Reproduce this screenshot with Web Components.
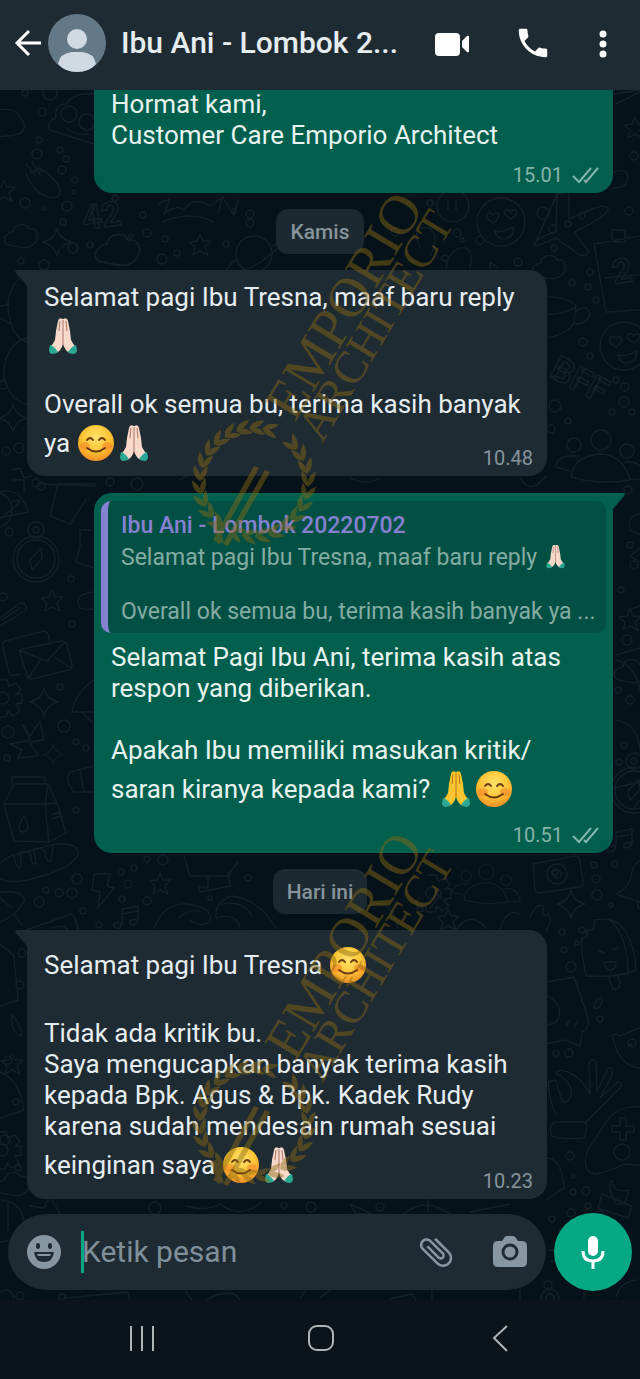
<!DOCTYPE html>
<html lang="id">
<head>
<meta charset="utf-8">
<meta name="viewport" content="width=device-width, initial-scale=1">
<title>Ibu Ani - Lombok</title>
<style>
  html, body { margin: 0; background: #0b141b; }
  body { font-family: Roboto, "Noto Sans", sans-serif; color: #e6edf0; }
</style>
</head>
<body>
<chat-app>
  <chat-header slot="header" name="Ibu Ani - Lombok 2..."></chat-header>

  <chat-bubble side="out" cut time="15.01" gap="12">
    <p>Hormat kami,</p>
    <p>Customer Care Emporio Architect</p>
  </chat-bubble>

  <day-chip>Kamis</day-chip>

  <chat-bubble side="in" tail time="10.48" gap="-12">
    <p>Selamat pagi Ibu Tresna, maaf baru reply</p>
    <p class="tall"><chat-emoji kind="hands"></chat-emoji></p>
    <p class="tall"></p>
    <p>Overall ok semua bu, terima kasih banyak</p>
    <p class="tall">ya <chat-emoji kind="smile"></chat-emoji><chat-emoji kind="hands"></chat-emoji></p>
  </chat-bubble>

  <chat-bubble side="out" tail time="10.51" gap="19">
    <quoted-message slot="quote" name="Ibu Ani - Lombok 20220702">
      <p>Selamat pagi Ibu Tresna, maaf baru reply <chat-emoji kind="hands" small></chat-emoji></p>
      <p></p>
      <p>Overall ok semua bu, terima kasih banyak ya ...</p>
    </quoted-message>
    <p>Selamat Pagi Ibu Ani, terima kasih atas</p>
    <p>respon yang diberikan.</p>
    <p></p>
    <p>Apakah Ibu memiliki masukan kritik/</p>
    <p class="tall">saran kiranya kepada kami? <chat-emoji kind="hands" tone="yellow"></chat-emoji><chat-emoji kind="smile"></chat-emoji></p>
  </chat-bubble>

  <day-chip>Hari ini</day-chip>

  <chat-bubble side="in" tail time="10.23" gap="-11">
    <p class="tall">Selamat pagi Ibu Tresna <chat-emoji kind="smile"></chat-emoji></p>
    <p class="tall"></p>
    <p>Tidak ada kritik bu.</p>
    <p>Saya mengucapkan banyak terima kasih</p>
    <p>kepada Bpk. Agus &amp; Bpk. Kadek Rudy</p>
    <p>karena sudah mendesain rumah sesuai</p>
    <p class="tall">keinginan saya <chat-emoji kind="smile"></chat-emoji><chat-emoji kind="hands"></chat-emoji></p>
  </chat-bubble>

  <message-composer slot="composer"></message-composer>
  <system-nav slot="nav"></system-nav>
</chat-app>

<script>
const define = (name, html, setup) => {
  const tpl = document.createElement('template');
  tpl.innerHTML = html;
  customElements.define(name, class extends HTMLElement {
    constructor() {
      super();
      this.attachShadow({ mode: 'open' }).append(tpl.content.cloneNode(true));
    }
    connectedCallback() { if (setup) setup(this, this.shadowRoot); }
  });
};

const buttonReset = `
  button { appearance: none; border: 0; padding: 0; background: none; color: inherit;
    display: grid; place-items: center; cursor: pointer; }
  svg { display: block; }`;

/* ---------- wallpaper of faint line doodles ---------- */
const dots = [[25,93,3],[50,93,7],[42,112,4],[39,140,3],[37,154,5],[60,150,3],[62,170,4],[66,159,3],[75,180,3],[74,192,2],
 [25,203,5],[44,208,2],[67,206,5],[63,222,3],[73,248,5],[90,245,3],[21,261,3],[44,265,5],[115,198,3],[143,215,3],[131,236,2],
 [147,233,4],[165,239,3],[162,259,5],[177,253,3],[226,244,3],[234,211,2],[250,214,4],[250,223,4],[6,451,4],[19,448,5],[3,385,4],[36,483,4],[110,482,4],[137,484,6],
 [9,532,4],[41,486,4],[71,579,3],[72,624,3],[3,597,4],[60,687,3],[8,732,6],[64,726,6],[76,742,3],[86,748,3],[7,758,3],
 [76,810,3],[77,879,5],[46,890,3],[59,893,4],[72,893,5],[39,902,5],[83,911,3],[99,925,3],[121,872,3],[134,868,3],[128,884,4],
 [122,899,3],[147,901,4],[147,859,3],[163,860,5],[248,878,3],[22,953,4],[20,985,4],
 [634,156,4],[543,213,6],[629,211,4],[553,229,4],[568,224,3],[582,216,3],[554,248,3],[572,283,3],[588,287,3],[590,272,3],[596,300,3],
 [583,342,4],[590,356,3],[555,406,6],[568,421,3],[551,429,4],[612,412,3],[616,380,3],[625,387,4],[624,402,5],[632,412,3],[628,490,4],
 [457,233,4],[518,262,4],[462,240,2],[630,545,3],[634,565,4],[621,590,3],[627,640,5],[618,690,3],[630,700,4],[624,745,3],[619,762,3],
 [594,865,3],[615,864,3],[596,879,4],[597,895,5],[611,905,2],[562,932,3],[582,930,3],[577,943,2],[564,950,3],[571,967,5],[600,1019,3],
 [556,1053,3],[569,1053,4],[570,1156,4],[573,1176,2],[573,1192,3],[586,1191,4],[588,1206,3],[571,1213,4],[8,1060,4],[16,1102,3],[5,1140,5],[18,1168,3],
 [155,1208,6],[284,1205,3],[311,1207,5],[380,1207,4],[20,1296,4],[62,1297,3],[548,1285,4],[552,1219,3],
 [480,240,4],[395,232,4],[445,258,3],[430,203,3],[555,872,3],[438,893,3],[420,909,3],[210,898,2],[600,1215,4]]
 .map(([x, y, r]) => `<circle cx="${x}" cy="${y}" r="${r}"/>`).join('');

define('chat-wallpaper', `
<style>
  :host { position: absolute; inset: 0; overflow: hidden; pointer-events: none; }
  svg { display: block; width: 100%; fill: none; stroke: #152128; stroke-width: 1.4px; stroke-linejoin: round; stroke-linecap: round; }
  text { font: 700 34px Roboto, sans-serif; }
</style>
<svg viewBox="0 90 640 1210" aria-hidden="true">
  <defs>
    <path id="star" d="M0-11 3-4 11-4 5 2 8 10 0 6-7 10-5 2-11-3-3-4Z"/>
    <path id="spark" d="M0-14Q2-3 14 0 2 3 0 14-3 3-14 0-2-3 0-14Z"/>
    <path id="cloud" d="M-14 8C-24 2-12-6-9-5-8-15 6-14 7-8 16-10 18 1 12 7 4 14-4 9-14 8Z"/>
    <g id="love"><circle r="24"/><path d="M-8 1C-20-6-12-13-8-7-4-13 2-6-8 1ZM10-3C-1-9 5-16 10-10 14-16 20-9 10-3ZM-6 9Q4 11 12 5 14 15 4 17-4 18-6 9Z"/></g>
    <g id="people"><circle r="10"/><path d="M-30 37Q-28 16 0 14 22 15 29 40-4 45-30 37Z"/><circle cx="-27" cy="5" r="7"/><circle cx="26" cy="11" r="7"/><path d="M-31 31-45 27Q-44 14-22 16M24 22Q42 20 45 40L30 39"/></g>
    <g id="envelope"><path d="M-22-14 17-24Q21-24 22-17L23-12M-22-14Q-26-12-24-8L-18 18Q-17 22-7 19"/><path d="M-5-6 34-14Q39-14 40-10L45 10Q45 14 42 15L5 24Q1 24 0 20L-7-2Q-8-5-5-6ZM-6-4 20 6 38-13M2 22 14 4M44 13 27 2"/></g>
    <g id="plane"><path d="M-40 24Q-40 16-18 10L-17-28M-17-28 -5-30-5-3 20-14Q34-18 34-12 30-4 0 10L15 30Q10 36 4 32L-18 16Q-36 24-40 24Z"/></g>
    <g id="calendar"><path d="M-28-18 40-30M-28-18-16 50 46 46M-18 16 46 10M-10-24V-32H3V-20H-8Z"/></g>
    <g id="milk"><path d="M-30-4-20-24H14L23-5 32 25 15 34-20 33ZM-30-4H11L23-5M11-4 15 34M14-24 11-4M-22-24V-31H11V-24"/><path d="M-10 8Q-20 24-10 24-2 22-10 8M18 7 26 4M18 11 26 8"/></g>
    <path id="bread" d="M-36 16Q-44 4-26-6L20-18Q42-20 42-8 36 6 6 14-26 24-36 16ZM-22-6Q-20 6-16 6-14 0-16-9-4-14-5-2-4 2 0 2L-2-13Q10-16 10-4 12 0 15-1L17-15"/>
    <g id="compass"><circle r="23"/><circle r="19"/><circle cy="-29" r="8"/><circle cy="-29" r="3"/><path d="M5-11-6 1-4 11 6-1Z"/></g>
    <g id="gear"><circle r="6"/><path d="M-4-18H4L6-12 13-15 18-8 13-4H19V5L13 6 17 13 10 18 5 13 3 19H-5L-6 13-13 15-17 9-12 5"/></g>
    <g id="camera"><path d="M-24-10 18-18Q22-18 23-13L26 8Q26 12 22 13L-17 19Q-21 19-22 15Z"/><circle r="10"/><circle r="4"/></g>
    <g id="ice"><path d="M-22 26Q-28-4-26-12-18-12-22-20-12-18-14-30 8-34 18-18 28 0 28 20 12 28-22 26ZM2-30Q20-14 20 24M0 26 5 39Q10 42 12 34L10 25"/><path d="M-10 0-4 3M5 0 10-3M-4 12H8Q8 20 2 20-4 18-4 12"/></g>
    <g id="hand"><path d="M-28-10Q-26 12-20 22M-28-10-20-12Q-14 14-10 10-2 6-6-6-14-18-20-18-18-24-8-20 6-14 14 2L13-28Q16-36 20-30L21 0 32-24Q38-26 36-16L24 6 42-10Q48-10 44-4 24 16 10 30M-22 30H8Q13 32 8 46-12 48-24 44-28 36-22 30Z"/></g>
    <g id="pad"><path d="M40-28Q10-34-4-14L-22 14Q-30 36-14 38 4 34 14 28L40 30"/><path d="M10-18H16V-10H24V-4H16V4H10V-4H2V-10H10Z"/><circle cx="12" cy="16" r="8"/></g>
    <g id="cup"><path d="M-30-14Q0-24 20-10L18 8Q10 24-30 24M-30-4Q0 4 20-8M20-4Q32-12 34 0 28 12 18 8"/></g>
    <path id="bolt" d="M-8-16H8L5-4 12-2-4 18-2 2-10 0Z"/>
    <path id="note" d="M-6 6V-8L10-11V3M-6-3 10-6M-6 6Q-16 4-14 10-8 14-6 6ZM10 3Q0 1 2 7 8 10 10 3Z"/>
    <g id="planet"><circle r="18"/><path d="M-17 5Q-34 18-24 20-2 18 24-6 28-12 18-8"/></g>
    <path id="glove" d="M-18-18-8-6M-12-20-4-8M-6-16-2-10M-18-8Q-8 14 8 16 20 16 14 2 4-10-6-14L-14-8"/>
    <path id="bell" d="M-22 14Q-8 8-6-8-2-24 16-20L30-12M-22 14 20 28M0 22Q-2 30 8 30"/>
  </defs>
  ${dots}
  <path d="M-2 110Q16 106 22 120 30 134 8 136L-2 137M50 130Q46 122 56 118 54 104 66 104 74 92 94 94M50 130 94 144"/>
  <circle cx="69" cy="114" r="8"/><circle cx="87" cy="122" r="8"/><path d="M66 128Q76 136 88 134"/>
  <use href="#glove" x="44" y="182"/><use href="#star" x="4" y="191"/><use href="#cloud" x="22" y="237"/><use href="#spark" x="57" y="242"/>
  <text x="84" y="230" transform="rotate(-8 84 230)">42</text>
  <path d="M158 204 170 199 164 214Q176 204 184 210 192 196 210 206L222 198 218 214M162 222Q190 210 214 222M222 196 234 216 238 200"/>
  <use href="#star" x="200" y="245"/><use href="#planet" x="254" y="254"/><use href="#cloud" x="118" y="252" transform="translate(-38 -84) scale(1.33)"/>
  <path d="M26 272Q2 290 10 320 14 338 27 342M27 338Q4 344 4 376 8 400 27 404M0 306 10 304M0 318 11 324"/>
  <use href="#spark" x="13" y="418"/><path d="M12 470 20 468 24 478 32 476M40 484 96 486M12 480H24V492"/>
  <use href="#planet" x="-6" y="510"/><path d="M58 484 50 516 70 524 86 500M58 484H96M0 492Q20 486 28 512L0 518"/>
  <use href="#compass" x="36" y="559"/><use href="#star" x="52" y="601"/><path d="M0 618 20 603Q28 603 26 610L0 626M2 620 20 608M94 592Q72 594 80 608 84 610 94 609M90 530H80V546L76 562 94 568"/>
  <use href="#envelope" x="27" y="655"/><use href="#gear" x="3" y="698"/><use href="#spark" x="44" y="702"/><path d="M94 680Q74 694 72 712H94M82 712 92 722M22 724 30 736 40 721 44 740 30 742 38 756 18 758 22 750 10 744 30 740Z"/>
  <use href="#spark" x="53" y="755" transform="translate(16 226) scale(.7)"/><use href="#milk" x="34" y="808"/><path d="M94 766 70 772Q64 780 74 792L94 792M80 770 84 792"/>
  <use href="#bread" x="36" y="862"/><path d="M0 892Q26 890 24 902 16 916 0 922M14 914 22 925M0 898 12 908M26 930 72 914Q76 918 78 930M52 928Q62 924 68 930"/>
  <use href="#bolt" x="102" y="890"/><use href="#star" x="160" y="884"/><use href="#note" x="128" y="917"/>
  <path d="M184 856 190 876H228L238 862M208 876V888Q196 884 200 892L230 886 228 872M154 928Q164 902 188 904 214 908 210 922 200 928 190 920M276 928Q260 900 232 896 214 902 216 918 236 912 240 928M178 918Q190 908 200 912M222 904Q244 900 252 916"/>
  <path d="M0 944 14 956 18 1000 0 1006M12 1014Q10 1030 20 1036 26 1034 12 1014ZM0 1072Q20 1080 24 1110L0 1118M2 1200Q26 1204 24 1228 20 1240 0 1242M8 1204V1230"/>
  <use href="#star" x="12" y="1064"/><use href="#gear" x="2" y="1150"/><use href="#cloud" x="14" y="1185"/>
  <use href="#star" x="635" y="128"/><path d="M616 104 640 92M614 94 640 90M614 172Q632 166 626 184 622 188 612 188"/>
  <use href="#plane" x="574" y="222"/><use href="#love" x="501" y="222"/><circle cx="453" cy="206" r="16"/><path d="M448 201V210M456 201V210"/>
  <path d="M446 268Q450 246 466 248 474 252 470 268M490 268V262L498 268M420 248Q410 224 430 228 440 238 430 256"/>
  <use href="#calendar" x="622" y="262"/><text x="614" y="284" transform="rotate(-8 614 284)">2</text><use href="#cloud" x="550" y="268"/>
  <use href="#cup" x="556" y="315"/><use href="#love" x="624" y="346"/><text x="548" y="376" transform="rotate(28 548 376)">BFF</text>
  <use href="#people" x="601" y="440"/><path d="M180 480Q192 470 204 480M350 478Q366 486 380 478M520 478Q530 496 546 476"/>
  <path d="M640 514Q626 516 630 530L640 534M640 548 630 556 640 562M628 610 640 606M616 660Q636 666 640 690M616 655 640 648M616 720Q638 724 640 750M614 788 640 782M632 810 640 800"/>
  <use href="#cloud" x="632" y="672"/><use href="#star" x="630" y="620"/><use href="#compass" x="634" y="790"/><use href="#note" x="622" y="840"/>
  <use href="#people" x="486" y="872" transform="translate(122 218) scale(.75)"/><use href="#camera" x="557" y="874"/><use href="#spark" x="571" y="904"/><use href="#bell" x="638" y="880"/>
  <path d="M530 918Q536 902 544 906 540 918 548 914 554 920 546 930M500 930Q506 908 520 914M430 908 440 896 448 906M366 906Q392 896 398 928M456 930Q470 910 486 928"/>
  <use href="#gear" x="432" y="893"/><use href="#star" x="448" y="920"/>
  <use href="#ice" x="608" y="950"/><path d="M546 982 574 977 588 1018Q590 1028 582 1032L580 1046 566 1040 546 1044M548 996Q566 1008 556 1022L546 1026M566 1026 570 1020M574 1028 578 1020M594 1008Q596 996 602 998 602 1010 594 1008Z"/>
  <path d="M640 1028Q624 1034 620 1036 610 1030 614 1042 620 1066 640 1068M628 1046 632 1044"/><circle cx="632" cy="1043" r="4"/>
  <use href="#hand" x="576" y="1092"/><use href="#pad" x="610" y="1136"/><path d="M546 1158Q562 1158 564 1188L546 1200M612 1180Q614 1194 628 1190 628 1206 616 1204 606 1186 612 1180ZM602 1194 632 1206 628 1218 598 1208Z"/>
  <path d="M30 1206 44 1208 48 1200M52 1200 60 1214M186 1206Q206 1212 220 1204 240 1220 262 1202M350 1204 372 1214 356 1214ZM404 1214Q424 1196 450 1214M428 1200V1212M470 1212 510 1204M560 1236Q556 1226 574 1222M548 1250H556M550 1262 560 1258"/>
  <path d="M0 1292Q10 1286 14 1298M66 1298 128 1292 130 1300M186 1292 192 1300M206 1300Q232 1286 240 1300M300 1298 306 1290M320 1298 330 1290M390 1299 412 1294 416 1300M432 1290V1300M520 1299V1290"/><circle cx="550" cy="1298" r="9"/><circle cx="550" cy="1298" r="4"/>
  <path d="M616 1297Q620 1282 636 1280M584 1298V1293"/>
</svg>`);

/* ---------- diagonal gold brand mark laid over the chat ---------- */
const leafRing = () => {
  let out = '';
  for (const side of [1, -1]) {
    for (let i = 0; i < 12; i++) {
      const a = 180 - side * (4 + i * 14);
      const r = a * Math.PI / 180;
      const x = Math.cos(r) * 54, y = Math.sin(r) * 54;
      for (const tilt of [26, -22]) {
        out += `<path transform="translate(${x.toFixed(1)} ${y.toFixed(1)}) rotate(${(a - side * (90 + tilt)).toFixed(1)})" d="M0 0Q7-6 17 0 7 5 0 0Z"/>`;
      }
    }
  }
  return out;
};
define('brand-mark', `
<style>
  :host { position: absolute; inset: 0; overflow: hidden; pointer-events: none; }
  svg { display: block; width: 100%; fill: #8c6c12; opacity: .46; }
  text { font-family: "Liberation Serif", serif; }
</style>
<svg viewBox="0 90 640 1210">
  <defs>
    <g id="wreath">
      <g transform="rotate(-59)">${leafRing()}</g>
      <path d="M0-16 5-14-36 60-41 58ZM11-12 16-10-26 64-31 62ZM-43 40-38 38-30 60-36 62Z"/>
    </g>
  </defs>
  <use href="#wreath" x="254" y="482"/>
  <text font-size="56" transform="translate(295 423) rotate(-59)">EMPORIO</text>
  <text font-size="46" transform="translate(322 444) rotate(-59)">ARCHITECT</text>
  <use href="#wreath" x="254" y="1122"/>
  <text font-size="56" transform="translate(295 1063) rotate(-59)">EMPORIO</text>
  <text font-size="46" transform="translate(322 1084) rotate(-59)">ARCHITECT</text>
</svg>`);

/* ---------- emoji ---------- */
const smileSvg = `
<svg viewBox="0 0 38 38" width="38" height="38"><defs>
  <radialGradient id="f" cx=".5" cy=".35" r=".65"><stop offset="0" stop-color="#ffe36b"/><stop offset=".6" stop-color="#fcc434"/><stop offset="1" stop-color="#ee8f24"/></radialGradient></defs>
  <circle cx="19" cy="19" r="18" fill="url(#f)"/>
  <ellipse cx="8" cy="22" rx="5" ry="4" fill="#f5792a" opacity=".5"/><ellipse cx="30" cy="22" rx="5" ry="4" fill="#f5792a" opacity=".5"/>
  <path d="M10 16Q13 12 16 16M22 16Q25 12 28 16M10 24Q19 31 28 24" fill="none" stroke="#6b3a12" stroke-width="2" stroke-linecap="round"/>
</svg>`;
const handsSvg = `
<svg viewBox="0 0 38 38" width="38" height="38">
  <path d="M18.500 2Q15 0 14 4L12 14 11 23Q9 27 7 29L12 36Q17 34 19 27 21 34 26 36L31 29Q29 27 27 23L26 14 24 4Q23 0 19.500 2Z" fill="var(--skin)"/>
  <path d="M19 3V28M16 4 15 14M22 4 23 14" fill="none" stroke="var(--line)" stroke-width="1"/>
  <path d="M6 28Q10 29 14 35 12 37 8 37 5 36 5 33ZM32 28Q28 29 24 35 26 37 30 37 33 36 33 33Z" fill="#2aa893"/>
</svg>`;
define('chat-emoji', `
<style>
  :host { display: inline-block; width: 38px; height: 38px; vertical-align: -10px; --skin: #f6d9c9; --line: #a9766b; }
  :host([tone="yellow"]) { --skin: #fbc52f; --line: #b9771a; }
  :host([small]) { width: 25px; height: 25px; vertical-align: -4px; }
  svg { display: block; width: 100%; height: 100%; }
</style><span></span>`, (host, root) => {
  const box = root.querySelector('span');
  const hands = host.getAttribute('kind') === 'hands';
  box.setAttribute('role', 'img');
  box.setAttribute('aria-label', hands ? 'terima kasih' : 'senyum');
  box.innerHTML = hands ? handsSvg : smileSvg;
});

/* ---------- header ---------- */
define('chat-header', `
<style>${buttonReset}
  :host { display: flex; align-items: center; height: 90px; box-sizing: border-box; padding: 0 17px 4px 12px;
    background: #1f2b33; color: #fff; position: relative; z-index: 2; }
  .back { width: 32px; height: 40px; }
  .avatar { flex: none; width: 58px; height: 58px; margin: 0 15px 0 4px; }
  h1 { flex: 1; min-width: 0; margin: 0; font-size: 30px; line-height: 36px; font-weight: 500; color: #e6edf0; white-space: nowrap; }
  .video, .call { width: 40px; height: 40px; }
  .call { margin-left: 42px; }
  .more { width: 40px; height: 40px; margin-left: 30px; }
</style>
<button class="back" aria-label="Kembali"><svg width="32" height="32" viewBox="0 0 32 32" fill="none" stroke="#fff" stroke-width="3"><path d="M29 16H5M17 4 5 16 17 28"/></svg></button>
<svg class="avatar" viewBox="0 0 58 58" role="img" aria-label="Foto profil"><circle cx="29" cy="29" r="29" fill="#647987"/>
  <path d="M10 50Q12 39 24 38H34Q46 39 48 50 41 58 29 58 17 58 10 50Z" fill="#d0dae2"/><circle cx="29" cy="25" r="10" fill="#d0dae2"/></svg>
<h1></h1>
<button class="video" aria-label="Panggilan video"><svg width="40" height="40" viewBox="0 0 40 40" fill="#fff"><rect x="4" y="10" width="25" height="23" rx="4"/><path d="M31 18 36 13Q38 12 38 14V28Q38 30 36 29L31 24Z"/></svg></button>
<button class="call" aria-label="Panggilan suara"><svg width="38" height="38" viewBox="0 0 24 24" fill="#fff"><path d="M20 15.500c-1.250 0-2.450-.2-3.570-.57-.35-.11-.74-.03-1.020.24l-2.200 2.200c-2.830-1.440-5.150-3.750-6.590-6.580l2.200-2.210c.28-.27.36-.66.25-1.010C8.700 6.450 8.500 5.250 8.500 4c0-.55-.45-1-1-1H4c-.55 0-1 .45-1 1 0 9.390 7.610 17 17 17 .55 0 1-.45 1-1v-3.500c0-.55-.45-1-1-1z"/></svg></button>
<button class="more" aria-label="Opsi lain"><svg width="12" height="34" viewBox="0 0 12 34" fill="#fff"><circle cx="6" cy="8" r="3.500"/><circle cx="6" cy="18" r="3.500"/><circle cx="6" cy="28" r="3.500"/></svg></button>
`, (host, root) => { root.querySelector('h1').textContent = host.getAttribute('name'); });

/* ---------- bubbles ---------- */
define('chat-bubble', `
<style>
  :host { display: block; position: relative; box-sizing: border-box; border-radius: 18px; font-size: 26px; line-height: 31px;
    padding: 12px 14px 6px 17px; }
  :host([side="in"]) { margin-left: 27px; margin-right: 93px; background: #1f2b33; color: #e6edf0; --meta: #87949c; --tail: #1f2b33; }
  :host([side="out"]) { margin-left: 94px; margin-right: 27px; background: #015f4d; color: #e6f3f0; --meta: #85b5ab; --tail: #015f4d; }
  :host([side="out"][tail]) { padding-top: 8px; border-top-right-radius: 0; }
  :host([side="in"][tail]) { border-top-left-radius: 0; }
  :host([cut]) { padding-top: 1px; margin-top: -2px; border-top-left-radius: 0; border-top-right-radius: 0; }
  .tail { display: none; position: absolute; top: 0; width: 12px; height: 18px; fill: var(--tail); }
  :host([tail]) .tail { display: block; }
  :host([side="in"]) .tail { right: 100%; }
  :host([side="out"]) .tail { left: 100%; transform: scaleX(-1); }
  ::slotted(p) { margin: 0; height: 31px; white-space: nowrap; }
  ::slotted(p.tall) { height: 38px; line-height: 46px; }
  .meta { display: flex; justify-content: flex-end; align-items: center; gap: 8px; font-size: 20px; line-height: 24px; color: var(--meta); }
  .ticks { display: none; }
  :host([side="out"]) .ticks { display: block; }
</style>
<svg class="tail" viewBox="0 0 12 18"><path d="M12 0H2Q-1 0 1 3L12 16Z"/></svg>
<slot name="quote"></slot><slot></slot>
<div class="meta"><time></time><svg class="ticks" width="28" height="20" viewBox="0 0 28 20" fill="none" stroke="currentColor" stroke-width="2"><path d="M2 11 8 17 20 3M13 15 15 17 27 3"/></svg></div>
`, (host, root) => {
  root.querySelector('time').textContent = host.getAttribute('time');
  root.querySelector('.meta').style.marginTop = host.getAttribute('gap') + 'px';
});

define('quoted-message', `
<style>
  :host { display: block; box-sizing: border-box; height: 132px; margin: 0 -7px 9px -10px; padding: 11px 8px 7px 13px; border-left: 7px solid #8680d2;
    border-radius: 10px; background: #025043; font-size: 23px; line-height: 27px; color: #84aca4; overflow: hidden; }
  strong { display: block; margin-bottom: 5px; font-weight: 500; color: #8680d2; white-space: nowrap; }
  ::slotted(p) { margin: 0; height: 27px; white-space: nowrap; }
</style>
<strong></strong><slot></slot>`, (host, root) => { root.querySelector('strong').textContent = host.getAttribute('name'); });

define('day-chip', `
<style>
  :host { display: block; width: max-content; margin: 16px auto; padding: 10px 14px 9px; border-radius: 12px; background: #1c2930;
    color: #87949c; font-size: 21px; line-height: 26px; font-weight: 500; }
</style><slot></slot>`);

/* ---------- composer ---------- */
define('message-composer', `
<style>${buttonReset}
  :host { display: flex; align-items: center; gap: 8px; padding: 14px 8px 9px; position: relative; }
  form { display: flex; align-items: center; flex: 1; min-width: 0; height: 76px; box-sizing: border-box; padding: 0 16px; border-radius: 38px; background: #1f2b33; color: #8797a2; }
  form button { flex: none; width: 40px; height: 40px; }
  .caret { flex: none; width: 3px; height: 42px; margin-left: 17px; background: #05a884; }
  input { flex: 1; min-width: 0; height: 44px; padding: 0; margin-left: -2px; border: 0; outline: 0; background: none; color: #e6edf0;
    font: 30px/44px Roboto, sans-serif; }
  input::placeholder { color: #80909a; opacity: 1; }
  .camera { margin-left: 34px; }
  .mic { flex: none; width: 78px; height: 78px; border-radius: 50%; background: #05a884; }
</style>
<form>
  <button type="button" aria-label="Emoji"><svg width="40" height="40" viewBox="0 0 40 40"><circle cx="20" cy="20" r="17" fill="currentColor"/>
    <g fill="#1f2b33"><ellipse cx="14" cy="14" rx="2" ry="3"/><ellipse cx="26" cy="14" rx="2" ry="3"/><path d="M10 20H30Q29 30 20 30 11 30 10 20ZM13 22Q13 24 15 24H25Q27 24 27 22Z" fill-rule="evenodd"/></g></svg></button>
  <span class="caret"></span>
  <input type="text" placeholder="Ketik pesan" aria-label="Ketik pesan">
  <button type="button" aria-label="Lampirkan"><svg width="40" height="40" viewBox="0 0 24 24" fill="currentColor"><path transform="rotate(-45 12 12)" d="M16.500 6v11.500c0 2.210-1.790 4-4 4s-4-1.790-4-4V5c0-1.380 1.120-2.500 2.500-2.500s2.500 1.120 2.500 2.500v10.500c0 .55-.45 1-1 1s-1-.45-1-1V6H10v9.500c0 1.380 1.120 2.500 2.500 2.500s2.500-1.120 2.500-2.500V5c0-2.210-1.790-4-4-4S7 2.790 7 5v12.500c0 3.040 2.460 5.500 5.500 5.500s5.500-2.460 5.500-5.500V6h-1.500z"/></svg></button>
  <button type="button" class="camera" aria-label="Kamera"><svg width="40" height="40" viewBox="0 0 40 40"><path fill="currentColor" d="M8 9H12L14 6Q15 4 17 4H23Q25 4 26 6L28 9H32Q37 9 37 14V30Q37 35 32 35H8Q3 35 3 30V14Q3 9 8 9Z"/><circle cx="20" cy="20" r="7" fill="none" stroke="#1f2b33" stroke-width="3"/></svg></button>
</form>
<button class="mic" aria-label="Rekam suara"><svg width="40" height="40" viewBox="0 0 40 40" fill="none" stroke="#fff" stroke-width="3"><rect x="15" y="4" width="10" height="20" rx="5" fill="#fff" stroke="none"/><path d="M10 19Q10 29 20 29 30 29 30 19M20 29V37"/></svg></button>
`);

define('system-nav', `
<style>${buttonReset}
  :host { display: flex; justify-content: space-evenly; align-items: center; height: 79px; padding: 0 0 3px 2px; box-sizing: border-box; background: #0b141b; }
  nav { display: flex; justify-content: space-around; width: 84%; }
  button { width: 60px; height: 40px; }
  svg { fill: none; stroke: #b0b5b8; stroke-width: 2px; }
</style>
<nav aria-label="Navigasi sistem">
  <button aria-label="Terkini"><svg width="30" height="30" viewBox="0 0 30 30"><path d="M4 3V28M15 3V28M26 3V28"/></svg></button>
  <button aria-label="Beranda"><svg width="30" height="30" viewBox="0 0 30 30"><rect x="3" y="3" width="24" height="24" rx="8"/></svg></button>
  <button aria-label="Kembali"><svg width="30" height="30" viewBox="0 0 30 30"><path d="M22 3 9 15 22 28"/></svg></button>
</nav>`);

define('chat-app', `
<style>
  :host { display: flex; flex-direction: column; min-height: 100vh; }
  .chat { position: relative; flex: 1; display: flex; flex-direction: column; background: #06121a; }
  main { position: relative; flex: 1; overflow: hidden; }
  .list { display: flow-root; }
  .list ::slotted(chat-bubble[side="in"]) { margin-bottom: 17px; }
  .list ::slotted(chat-bubble:last-of-type) { margin-bottom: 0; }
</style>
<slot name="header"></slot>
<div class="chat">
  <chat-wallpaper></chat-wallpaper>
  <main><div class="list"><slot></slot></div></main>
  <slot name="composer"></slot>
  <brand-mark></brand-mark>
</div>
<slot name="nav"></slot>`);
</script>
</body>
</html>
